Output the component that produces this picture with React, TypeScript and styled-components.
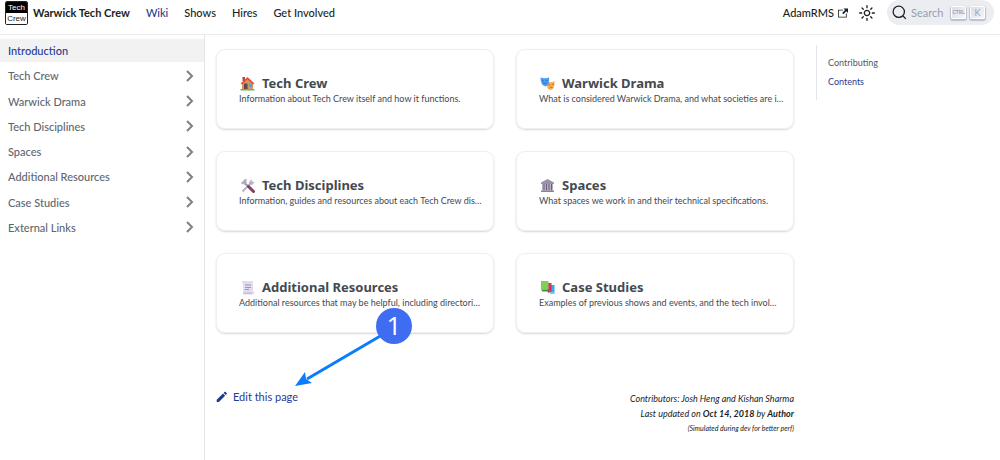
import React from "react";
import styled, { createGlobalStyle } from "styled-components";

const GlobalStyle = createGlobalStyle`
  * { box-sizing: border-box; }
  body {
    margin: 0;
    background: #fff;
    color: #1c1e21;
    font-family: Lato, "Liberation Sans", sans-serif;
    font-size: 11px;
  }
  a { color: inherit; text-decoration: none; }
  ul { list-style: none; margin: 0; padding: 0; }
`;

const Navbar = styled.header`
  display: flex;
  align-items: center;
  justify-content: space-between;
  height: 35px;
  padding: 0 6px 9px 5px;
  border-bottom: 1px solid #e9eaec;
`;

const NavGroup = styled.nav`
  display: flex;
  align-items: center;
`;

const Brand = styled.a`
  display: flex;
  align-items: center;
  gap: 5px;
  margin-right: 8px;
  font-weight: 700;
`;

const Logo = styled.span`
  display: flex;
  flex-direction: column;
  width: 23px;
  border: 1px solid #222;
  border-radius: 2px;
  overflow: hidden;
  font: 8px/11px "Liberation Sans", sans-serif;
  text-align: center;
`;

const LogoHalf = styled.span<{ $dark?: boolean }>`
  height: 11px;
  background: ${(p) => (p.$dark ? "#000" : "#fff")};
  color: ${(p) => (p.$dark ? "#fff" : "#222")};
`;

const NavLink = styled.a<{ $active?: boolean }>`
  display: flex;
  align-items: center;
  gap: 4px;
  padding: 0 8px;
  font-weight: 500;
  color: ${(p) => (p.$active ? "#1f3a93" : "#1c1e21")};
`;

const ThemeButton = styled.button`
  display: flex;
  padding: 0;
  margin: 0 12px 0 3px;
  border: 0;
  background: none;
  color: #1c1e21;
`;

const SearchButton = styled.button`
  display: flex;
  align-items: center;
  width: 107px;
  height: 25px;
  padding: 0 9px 0 5px;
  border: 0;
  border-radius: 13px;
  background: #ebedf0;
  color: #969faf;
  font: 11px Lato, sans-serif;
`;

const SearchLabel = styled.span`
  flex: 1;
  padding-left: 4px;
  text-align: left;
`;

const Key = styled.kbd<{ $small?: boolean }>`
  width: 15px;
  height: 13px;
  margin-left: 4px;
  border-radius: 2px;
  background: linear-gradient(135deg, #d5dbe4, #f8f8f8);
  box-shadow: inset 0 0 0 1px #fff, 0 1px 1px 1px #b9bdd6;
  font: ${(p) => (p.$small ? 5 : 9)}px/13px Lato, sans-serif;
  font-weight: ${(p) => (p.$small ? 700 : 400)};
  text-align: center;
`;

const Layout = styled.div`
  display: flex;
  min-height: calc(100vh - 35px);
`;

const Sidebar = styled.aside`
  width: 205px;
  flex: none;
  padding-top: 4px;
  border-right: 1px solid #e3e5e8;
`;

const Menu = styled.ul`
  display: flex;
  flex-direction: column;
  justify-content: space-between;
  height: 200px;
`;

const MenuLink = styled.a<{ $active?: boolean }>`
  display: flex;
  align-items: center;
  justify-content: space-between;
  height: 23px;
  padding: 0 9px 0 8px;
  background: ${(p) => (p.$active ? "#f2f2f2" : "none")};
  color: ${(p) => (p.$active ? "#1f3a93" : "#606770")};
  font-weight: 500;
`;

const Main = styled.main`
  position: relative;
  flex: 1;
  min-width: 0;
  padding: 14px 11px 0;
`;

const Cards = styled.section`
  display: grid;
  grid-template-columns: repeat(2, minmax(0, 1fr));
  gap: 22px;
`;

const Card = styled.a`
  display: block;
  height: 80px;
  padding: 23px 6px 23px 22px;
  border: 1px solid #eeeff1;
  border-radius: 9px;
  box-shadow: 0 1px 2px rgba(0, 0, 0, 0.16);
  color: #444950;
`;

const CardTitle = styled.h2`
  display: flex;
  align-items: center;
  gap: 7px;
  margin: 0;
  padding-left: 1px;
  font: 700 13px/20px "Noto Sans", sans-serif;
`;

const CardText = styled.p`
  margin: 0;
  overflow: hidden;
  font-size: 9px;
  line-height: 12px;
  text-overflow: ellipsis;
  white-space: nowrap;
`;

const PageFooter = styled.footer`
  display: flex;
  justify-content: space-between;
  padding-top: 58px;
`;

const EditLink = styled.a`
  display: flex;
  align-items: center;
  align-self: flex-start;
  gap: 5px;
  line-height: 12px;
  color: #1f3a93;
`;

const Credits = styled.div`
  font-size: 9px;
  font-style: italic;
  line-height: 15px;
  text-align: right;
`;

const Note = styled.div`
  font-size: 7px;
`;

const TocColumn = styled.aside`
  width: 195px;
  flex: none;
  padding: 10px 11px 0;
`;

const Toc = styled.ul`
  display: flex;
  flex-direction: column;
  gap: 7px;
  padding: 12px 11px;
  border-left: 1px solid #e3e5e8;
  font-size: 9px;
  line-height: 12px;
`;

const TocLink = styled.a<{ $active?: boolean }>`
  color: ${(p) => (p.$active ? "#1f3a93" : "#525860")};
`;

const Callout = styled.div`
  position: absolute;
  left: 88px;
  top: 273px;
  width: 120px;
  height: 80px;
`;

const Arrow = styled.svg`
  display: block;
`;

const Marker = styled.span`
  position: absolute;
  right: 1px;
  top: 0;
  width: 36px;
  height: 36px;
  border-radius: 50%;
  background: #3f6df2;
  color: #fff;
  font: 26px/35px "Open Sans", sans-serif;
  text-align: center;
`;

const icon = { width: 15, height: 15, viewBox: "0 0 30 30" };

const House = () => (
  <svg {...icon}>
    <path d="M5 2h5v8H5z" fill="#a5503f" />
    <path d="M4 14 15 4l11 10v13H4z" fill="#cf9a68" />
    <path d="M1 15 15 2l14 13-3 2L15 7 4 17z" fill="#e8503a" />
    <path d="M8 15h7v12H8z" fill="#6d4544" />
    <path d="M18 15h6v7h-6z" fill="#45a6ee" />
    <path d="M1 26h28v3H1z" fill="#64b653" />
  </svg>
);
const Masks = () => (
  <svg {...icon}>
    <path d="M14 12q8 2 15-2 1 17-8 18-9-2-7-16z" fill="#f8b04c" />
    <path d="m17 17 4 1m3-1 4-1m-9 8q2-3 6-1" stroke="#c56d2c" strokeWidth="2" fill="none" />
    <path d="M1 3q9 3 17 0 2 15-7 18Q1 19 1 3z" fill="#4a9df4" />
    <path d="m4 9 4 1m3 0 4-1M6 14q4 3 8-1" stroke="#2f6fd0" strokeWidth="2" fill="none" />
  </svg>
);
const Tools = () => (
  <svg {...icon}>
    <path d="M5 27 22 10" stroke="#b9b0c6" strokeWidth="4" />
    <path d="m18 9 5-7 1 5 5 1-5 6-6-1z" fill="#b9b0c6" />
    <path d="m9 10 10 9" stroke="#a196ae" strokeWidth="4" />
    <path d="m17 17 10 10" stroke="#86405c" strokeWidth="6" strokeLinecap="round" />
    <path d="m2 10 8-8 5 1-3 3 2 3-5 5-3-3-2 2z" fill="#b3aac1" />
  </svg>
);
const Building = () => (
  <svg {...icon}>
    <path d="M2 9 15 2l13 7v3H2z" fill="#9c92a8" />
    <path d="M4 12h22v13H4z" fill="#b7aec2" />
    <path d="M8 12v13m5-13v13m5-13v13m5-13v13" stroke="#6b5f79" strokeWidth="2" />
    <path d="M2 25h26v3H2z" fill="#8b8098" />
  </svg>
);
const Page = () => (
  <svg {...icon}>
    <path d="M4 2h22v21h3q0 6-5 6H6V8q-2 0-2-6z" fill="#e2dcee" />
    <path d="M7 25h17v3H7z" fill="#c6bad8" />
    <path d="M10 10h12m-12 5h12m-12 4h8" stroke="#a095b2" strokeWidth="2" />
  </svg>
);
const Books = () => (
  <svg {...icon}>
    <path d="M18 10h11v16l-9 2z" fill="#38a8f0" />
    <path d="M12 6h11v17l-7 3z" fill="#dc2f62" />
    <path d="M2 2h15v17H2z" fill="#82cf57" />
    <path d="M2 19h15v4H5z" fill="#3d9149" />
    <path d="M20 24h9v4h-9z" fill="#7cc9f8" />
  </svg>
);

const Chevron = () => (
  <svg width="10" height="14" viewBox="0 0 10 14" fill="none" stroke="#7d8085" strokeWidth="2">
    <path d="m2 2 5 5-5 5" />
  </svg>
);
const ExternalIcon = () => (
  <svg width="10" height="10" viewBox="0 0 24 24" fill="currentColor">
    <path d="M21 13v10h-21v-19h12v2h-10v15h17v-8h2zm3-12h-10.988l4.035 4-6.977 7.07 2.828 2.828 6.977-7.07 4.125 4.172v-11z" />
  </svg>
);
const SunIcon = () => (
  <svg width="16" height="16" viewBox="0 0 24 24" fill="currentColor">
    <path d="M12,9c1.65,0,3,1.35,3,3s-1.35,3-3,3s-3-1.35-3-3S10.35,9,12,9 M12,7c-2.76,0-5,2.24-5,5s2.24,5,5,5s5-2.24,5-5 S14.76,7,12,7L12,7z" />
    <path
      d="M1 12h3M20 12h3M12 1v3M12 20v3M4.6 4.6l1.8 1.8M17.6 17.6l1.8 1.8M4.6 19.4l1.8-1.8M17.6 6.4l1.8-1.8"
      stroke="currentColor"
      strokeWidth="2"
      strokeLinecap="round"
    />
  </svg>
);
const SearchIcon = () => (
  <svg width="15" height="15" viewBox="0 0 20 20" fill="none" stroke="#1c1e21" strokeWidth="1.7" strokeLinecap="round">
    <path d="M14.386 14.386l4.088 4.088-4.088-4.088A7.533 7.533 0 1 1 3.733 3.733a7.533 7.533 0 0 1 10.653 10.653z" />
  </svg>
);
const PencilIcon = () => (
  <svg width="12" height="12" viewBox="3 3 35 35" fill="currentColor">
    <path d="m34.5 11.7-3 3.1-6.3-6.3 3.1-3q0.5-0.5 1.2-0.5t1.1 0.5l3.9 3.9q0.5 0.4 0.5 1.1t-0.5 1.2z m-29.5 17.1l18.4-18.5 6.3 6.3-18.4 18.4h-6.3v-6.2z" />
  </svg>
);

const menu = [
  "Introduction",
  "Tech Crew",
  "Warwick Drama",
  "Tech Disciplines",
  "Spaces",
  "Additional Resources",
  "Case Studies",
  "External Links",
];

const cards = [
  { Icon: House, title: "Tech Crew", text: "Information about Tech Crew itself and how it functions." },
  { Icon: Masks, title: "Warwick Drama", text: "What is considered Warwick Drama, and what societies are i…" },
  { Icon: Tools, title: "Tech Disciplines", text: "Information, guides and resources about each Tech Crew dis…" },
  { Icon: Building, title: "Spaces", text: "What spaces we work in and their technical specifications." },
  { Icon: Page, title: "Additional Resources", text: "Additional resources that may be helpful, including directori…" },
  { Icon: Books, title: "Case Studies", text: "Examples of previous shows and events, and the tech invol…" },
];

export default function App() {
  return (
    <>
      <GlobalStyle />
      <Navbar>
        <NavGroup>
          <Brand href="#">
            <Logo>
              <LogoHalf $dark>Tech</LogoHalf>
              <LogoHalf>Crew</LogoHalf>
            </Logo>
            Warwick Tech Crew
          </Brand>
          <NavLink href="#" $active>Wiki</NavLink>
          <NavLink href="#">Shows</NavLink>
          <NavLink href="#">Hires</NavLink>
          <NavLink href="#">Get Involved</NavLink>
        </NavGroup>
        <NavGroup>
          <NavLink href="#">
            AdamRMS
            <ExternalIcon />
          </NavLink>
          <ThemeButton aria-label="Switch theme">
            <SunIcon />
          </ThemeButton>
          <SearchButton>
            <SearchIcon />
            <SearchLabel>Search</SearchLabel>
            <Key $small>CTRL</Key>
            <Key>K</Key>
          </SearchButton>
        </NavGroup>
      </Navbar>
      <Layout>
        <Sidebar>
          <Menu>
            {menu.map((label, i) => (
              <li key={label}>
                <MenuLink href="#" $active={i === 0}>
                  {label}
                  {i > 0 && <Chevron />}
                </MenuLink>
              </li>
            ))}
          </Menu>
        </Sidebar>
        <Main>
          <Cards>
            {cards.map(({ Icon, title, text }) => (
              <Card href="#" key={title}>
                <CardTitle>
                  <Icon />
                  {title}
                </CardTitle>
                <CardText>{text}</CardText>
              </Card>
            ))}
          </Cards>
          <PageFooter>
            <EditLink href="#">
              <PencilIcon />
              Edit this page
            </EditLink>
            <Credits>
              <div>Contributors: Josh Heng and Kishan Sharma</div>
              <div>
                Last updated on <b>Oct 14, 2018</b> by <b>Author</b>
              </div>
              <Note>(Simulated during dev for better perf)</Note>
            </Credits>
          </PageFooter>
          <Callout>
            <Arrow width="120" height="80" viewBox="0 0 120 80">
              <path d="M89 27 14 71" stroke="#0a7cff" strokeWidth="3" />
              <path d="m2 78 10-14 1 7 6 4z" fill="#0a7cff" />
            </Arrow>
            <Marker>1</Marker>
          </Callout>
        </Main>
        <TocColumn>
          <Toc>
            <li><TocLink href="#">Contributing</TocLink></li>
            <li><TocLink href="#" $active>Contents</TocLink></li>
          </Toc>
        </TocColumn>
      </Layout>
    </>
  );
}
